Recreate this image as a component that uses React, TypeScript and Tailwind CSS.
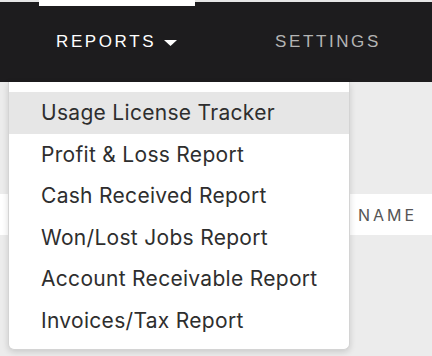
import React from "react";

const items = [
  "Usage License Tracker",
  "Profit & Loss Report",
  "Cash Received Report",
  "Won/Lost Jobs Report",
  "Account Receivable Report",
  "Invoices/Tax Report",
];

export default function App() {
  return (
    <div className="relative w-[432px] h-[356px] overflow-hidden bg-[#ececec]">
      {/* top nav */}
      <div className="h-[2px] bg-[#e6e6e6]" />
      <div className="relative h-[80px] bg-[#1d1c1e] flex items-center font-['Liberation_Sans',Arial,sans-serif] text-[17px] tracking-[2.6px]">
        <div className="absolute left-[39px] top-[-2px] w-[156px] h-[6px] bg-white" />
        <div className="ml-[56px] flex items-center text-white">
          <span>REPORTS</span>
          <svg width="13" height="6" viewBox="0 0 13 6" className="ml-[8px] mt-[1px]">
            <path d="M0 0 H13 L6.5 6 Z" fill="#ffffff" />
          </svg>
        </div>
        <div className="ml-[98px] text-[#b4b4b4]">SETTINGS</div>
      </div>

      {/* page behind */}
      <div className="mt-[112px] h-[41px] bg-white flex items-center pl-[358px] font-['Inter',sans-serif] text-[16px] tracking-[3px] text-[#555]">
        NAME
      </div>

      {/* dropdown */}
      <div className="absolute left-[8px] top-[82px] w-[342px] bg-white rounded-b-[6px] border border-[#d4d4d4] border-t-0 shadow-[0_2px_6px_rgba(0,0,0,0.15)] pt-[10px] pb-[8px] font-['Inter',sans-serif] text-[21px] tracking-[0.3px] text-[#2e2e2e]">
        {items.map((item, i) => (
          <div
            key={item}
            className={
              i === 0
                ? "h-[41.5px] flex items-center pl-[32px] bg-[#e6e6e6]"
                : "h-[41.5px] flex items-center pl-[32px]"
            }
          >
            {item}
          </div>
        ))}
      </div>
    </div>
  );
}
